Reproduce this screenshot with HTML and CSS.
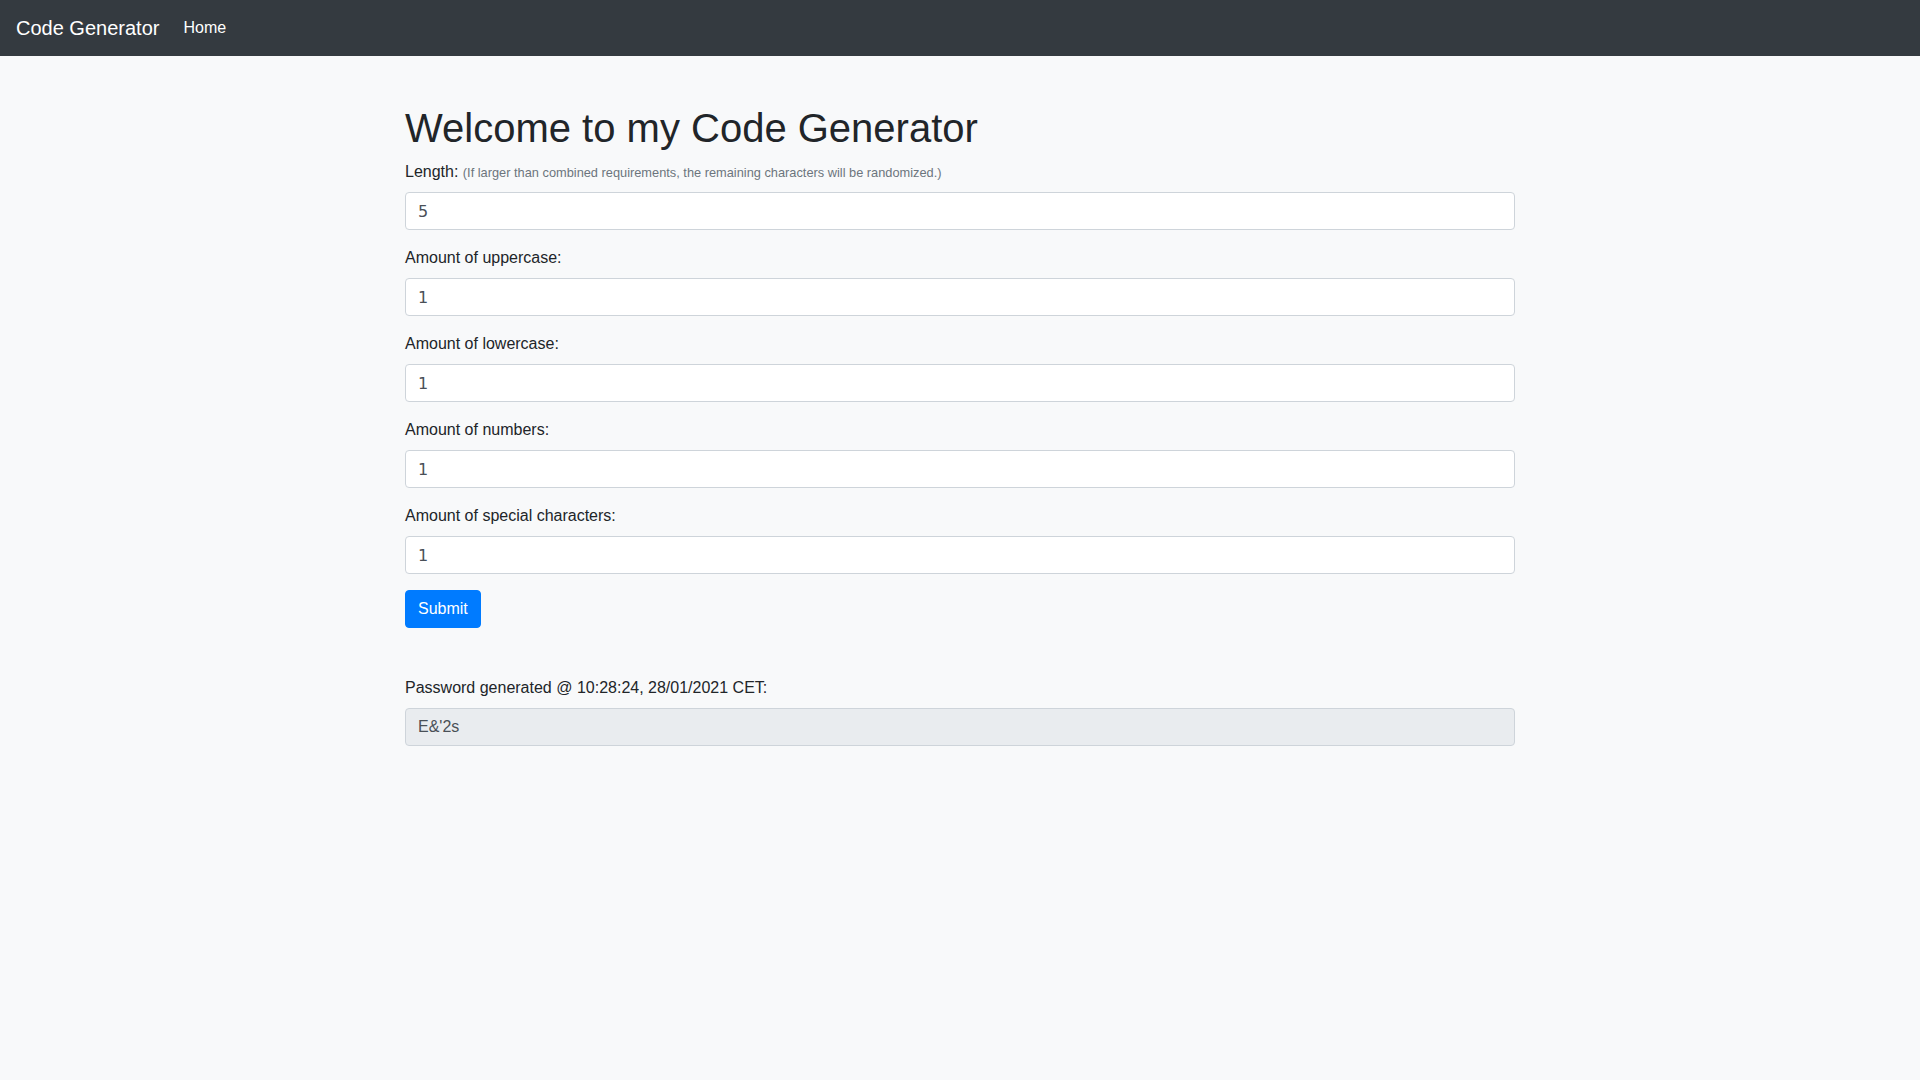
FILE: index.html
```html
<!DOCTYPE html>
<html lang="en">
<head>
<meta charset="utf-8">
<title>Code Generator</title>
<link rel="stylesheet" href="styles.css">
</head>
<body>
<nav class="navbar">
  <a class="brand" href="#">Code Generator</a>
  <a class="nav-link" href="#">Home</a>
</nav>
<main class="container">
  <h1 class="title">Welcome to my Code Generator</h1>
  <form class="form">
    <div class="form-group">
      <label class="label">Length: <small class="muted">(If larger than combined requirements, the remaining characters will be randomized.)</small></label>
      <input class="control num" type="text" value="5">
    </div>
    <div class="form-group">
      <label class="label">Amount of uppercase:</label>
      <input class="control num" type="text" value="1">
    </div>
    <div class="form-group">
      <label class="label">Amount of lowercase:</label>
      <input class="control num" type="text" value="1">
    </div>
    <div class="form-group">
      <label class="label">Amount of numbers:</label>
      <input class="control num" type="text" value="1">
    </div>
    <div class="form-group">
      <label class="label">Amount of special characters:</label>
      <input class="control num" type="text" value="1">
    </div>
    <button class="btn" type="button">Submit</button>
  </form>
  <div class="result">
    <label class="label">Password generated @ 10:28:24, 28/01/2021 CET:</label>
    <input class="control readonly" type="text" value="E&amp;'2s" readonly>
  </div>
</main>
</body>
</html>
```
FILE: styles.css
```css
* { box-sizing: border-box; }
html, body { margin: 0; }
body {
  background: #f8f9fa;
  color: #212529;
  font-family: "Liberation Sans", Arial, sans-serif;
  font-size: 16px;
  line-height: 1.5;
}
.navbar {
  background: #343a40;
  height: 56px;
  padding: 8px 16px;
  display: flex;
  align-items: center;
}
.brand {
  color: #fff;
  font-size: 20px;
  line-height: 30px;
  padding: 5px 0;
  margin-right: 16px;
  text-decoration: none;
}
.nav-link {
  color: #fff;
  padding: 8px;
  text-decoration: none;
}
.container {
  width: 1140px;
  padding: 0 15px;
  margin: 48px auto 0;
}
.title {
  font-size: 40px;
  font-weight: 500;
  line-height: 1.2;
  margin: 0 0 8px;
}
.form-group { margin-bottom: 16px; }
.label {
  display: block;
  margin-bottom: 8px;
}
.muted {
  color: #6c757d;
  font-size: 80%;
}
.control {
  display: block;
  width: 100%;
  height: 38px;
  padding: 6px 12px;
  font-size: 16px;
  line-height: 1.5;
  color: #495057;
  background: #fff;
  border: 1px solid #ced4da;
  border-radius: 4px;
  font-family: "Liberation Sans", Arial, sans-serif;
  outline: none;
}
.num { font-family: "DejaVu Sans", sans-serif; }
.readonly { background: #e9ecef; }
.btn {
  display: inline-block;
  height: 38px;
  padding: 6px 12px;
  font-family: "Liberation Sans", Arial, sans-serif;
  font-size: 16px;
  line-height: 1.5;
  color: #fff;
  background: #007bff;
  border: 1px solid #007bff;
  border-radius: 4px;
}
.result { margin-top: 48px; }
```
